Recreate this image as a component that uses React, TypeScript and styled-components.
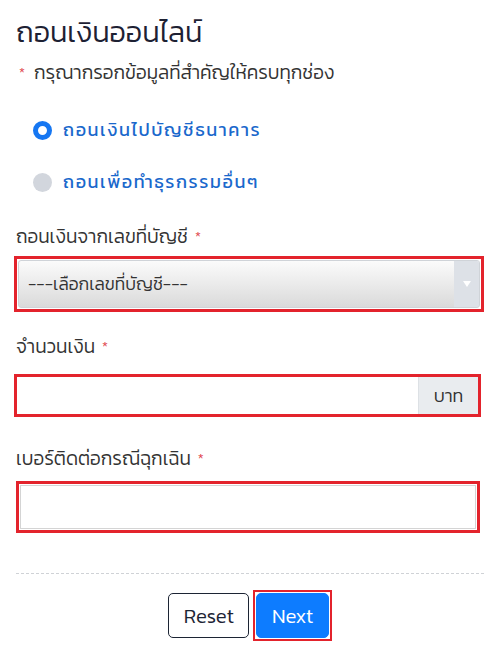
import React from "react";
import styled, { createGlobalStyle } from "styled-components";

const Global = createGlobalStyle`
  html, body { margin: 0; padding: 0; background: #fff; }
  body { font-family: Kanit, "Noto Sans Thai", sans-serif; font-weight: 300; }
  * { box-sizing: border-box; }
`;

const Page = styled.div`
  padding: 12px 16px 10px 16px;
  display: flex;
  flex-direction: column;
`;

const Title = styled.h1`
  margin: 0;
  font-size: 29px;
  font-weight: 300;
  line-height: 40px;
  color: #1d2133;
`;

const Note = styled.p`
  margin: 8px 0 0 3px;
  font-size: 19px;
  line-height: 26px;
  color: #333;
  display: flex;
  gap: 9px;
`;

const Star = styled.span`
  color: #e0444c;
  font-size: 14px;
`;

const Radios = styled.div`
  display: flex;
  flex-direction: column;
  gap: 26px;
  padding: 31px 0 0 17px;
`;

const RadioRow = styled.label`
  display: flex;
  align-items: center;
  gap: 11px;
  font-size: 18px;
  font-weight: 400;
  letter-spacing: 1.6px;
  color: #1a68cc;
  line-height: 26px;
`;

const Dot = styled.span<{ $on?: boolean }>`
  width: 19px;
  height: 19px;
  border-radius: 50%;
  background: ${(p) => (p.$on ? "#fff" : "#d2d6dd")};
  border: ${(p) => (p.$on ? "5px solid #1677f2" : "none")};
  flex: none;
`;

const Field = styled.div<{ $top: number; $gap: number }>`
  display: flex;
  flex-direction: column;
  gap: ${(p) => p.$gap}px;
  margin-top: ${(p) => p.$top}px;
`;

const Label = styled.div`
  font-size: 19px;
  line-height: 26px;
  color: #333;
  display: flex;
  gap: 7px;
`;

const Invalid = styled.div<{ $w: string; $shift?: number; $pad?: number }>`
  border: 3px solid #e3232c;
  padding: ${(p) => p.$pad ?? 1}px;
  width: ${(p) => p.$w};
  margin-left: ${(p) => p.$shift ?? 0}px;
`;

const Select = styled.div`
  display: flex;
  height: 48px;
  border: 1px solid #cfd3d8;
  border-radius: 3px;
  background: linear-gradient(#fbfbfb, #dadada);
  overflow: hidden;
`;

const SelectText = styled.div`
  flex: 1;
  display: flex;
  align-items: center;
  padding-left: 9px;
  font-size: 17.5px;
  color: #333;
`;

const Arrow = styled.div`
  width: 25px;
  background: #dde1e7;
  display: flex;
  align-items: center;
  justify-content: center;
`;

const Group = styled.div`
  display: flex;
  height: 37px;
`;

const Input = styled.div`
  flex: 1;
  background: #fff;
`;

const Addon = styled.div`
  width: 60px;
  background: #e9ecef;
  border-left: 1px solid #dde1e5;
  display: flex;
  align-items: center;
  justify-content: center;
  font-size: 18px;
  color: #333;
`;

const Box = styled.div`
  height: 44px;
  border: 1px solid #d4d4d4;
  background: #fff;
`;

const Divider = styled.hr`
  border: none;
  border-top: 1px dashed #cfd2d6;
  margin: 40px 0 0 0;
`;

const Actions = styled.div`
  display: flex;
  justify-content: center;
  align-items: center;
  gap: 4px;
  margin-top: 16px;
`;

const Button = styled.button<{ $primary?: boolean }>`
  font-family: Kanit, sans-serif;
  font-weight: 300;
  font-size: 20.5px;
  height: 45px;
  padding: 0 14.5px;
  border-radius: 5px;
  border: 1px solid ${(p) => (p.$primary ? "#0d7cff" : "#1c2434")};
  background: ${(p) => (p.$primary ? "#0d7cff" : "#fff")};
  color: ${(p) => (p.$primary ? "#fff" : "#1c2434")};
`;

const Focus = styled.div`
  border: 2px solid #e3232c;
  padding: 1px;
  background: #fff;
  display: flex;
`;

export default function App() {
  return (
    <>
      <Global />
      <Page>
        <Title>ถอนเงินออนไลน์</Title>
        <Note>
          <Star>*</Star>
          <span>กรุณากรอกข้อมูลที่สำคัญให้ครบทุกช่อง</span>
        </Note>
        <Radios>
          <RadioRow>
            <Dot $on />
            ถอนเงินไปบัญชีธนาคาร
          </RadioRow>
          <RadioRow>
            <Dot />
            ถอนเพื่อทำธุรกรรมอื่นๆ
          </RadioRow>
        </Radios>
        <Field $top={29} $gap={6}>
          <Label>
            ถอนเงินจากเลขที่บัญชี <Star>*</Star>
          </Label>
          <Invalid $w="calc(100% + 2px)" $shift={-2}>
            <Select>
              <SelectText>---เลือกเลขที่บัญชี---</SelectText>
              <Arrow>
                <svg width="10" height="8" viewBox="0 0 10 8">
                  <path d="M1 1h8L5 7z" fill="#fff" />
                </svg>
              </Arrow>
            </Select>
          </Invalid>
        </Field>
        <Field $top={22} $gap={14}>
          <Label>
            จำนวนเงิน <Star>*</Star>
          </Label>
          <Invalid $w="calc(100% - 1px)" $shift={-2} $pad={0}>
            <Group>
              <Input />
              <Addon>บาท</Addon>
            </Group>
          </Invalid>
        </Field>
        <Field $top={29} $gap={9}>
          <Label>
            เบอร์ติดต่อกรณีฉุกเฉิน <Star>*</Star>
          </Label>
          <Invalid $w="calc(100% - 4px)">
            <Box />
          </Invalid>
        </Field>
        <Divider />
        <Actions>
          <Button>Reset</Button>
          <Focus>
            <Button $primary>Next</Button>
          </Focus>
        </Actions>
      </Page>
    </>
  );
}
